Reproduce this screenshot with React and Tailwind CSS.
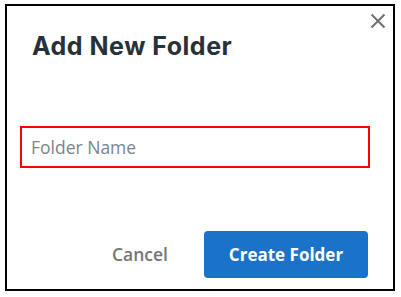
import React, { useState } from "react";

export default function App() {
  const [name, setName] = useState("");

  return (
    <div className="min-h-screen bg-white pl-[5px] pt-[4px]">
      <div className="relative flex h-[287px] w-[390px] flex-col border-2 border-black bg-white">
        {/* close */}
        <button className="absolute right-[7px] top-[7px] text-[#6f6f6f]" aria-label="Close">
          <svg width="16" height="16" viewBox="0 0 16 16" fill="none" stroke="currentColor" strokeWidth="2">
            <path d="M1.5 1.5 L14.5 14.5 M14.5 1.5 L1.5 14.5" />
          </svg>
        </button>

        <h2
          className="ml-[25px] mt-[25px] text-[25px] font-bold leading-[30px] tracking-[0.5px] text-[#263238]"
          style={{ fontFamily: "Inter, 'Noto Sans', sans-serif" }}
        >
          Add New Folder
        </h2>

        <input
          value={name}
          onChange={(e) => setName(e.target.value)}
          placeholder="Folder Name"
          className="ml-[13px] mt-[65px] h-[42px] w-[350px] border-2 border-[#ff0000] bg-white px-[9px] text-[17.5px] text-[#37474f] outline-none placeholder:text-[#7b848b]"
          style={{ fontFamily: "'Open Sans', sans-serif" }}
        />

        <div className="flex-1" />

        {/* actions */}
        <div
          className="flex items-center justify-end gap-[36px] pb-[11px] pr-[25px]"
          style={{ fontFamily: "'Open Sans', sans-serif" }}
        >
          <button className="text-[17.5px] font-semibold text-[#767676]">Cancel</button>
          <button className="h-[47px] w-[164px] rounded-[4px] bg-[#1a73c8] text-[17px] font-bold text-white">
            Create Folder
          </button>
        </div>
      </div>
    </div>
  );
}
